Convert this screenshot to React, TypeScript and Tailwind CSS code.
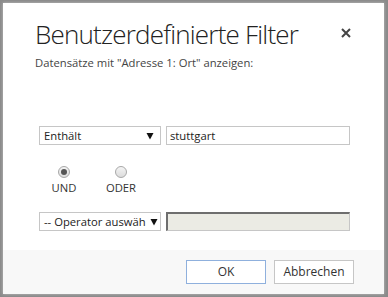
import React from 'react';

const font = { fontFamily: '"Open Sans", "Liberation Sans", sans-serif' };

function Select({ label }: { label: string }) {
  return (
    <div className="flex h-[19px] w-[122px] items-center justify-between border border-[#c6c6c6] bg-white pl-[4px] pr-[6px] text-[11.25px] text-[#222]">
      <span className="whitespace-nowrap leading-[15px]">{label}</span>
      <svg width="8" height="8" viewBox="0 0 8 8" className="ml-[4px] shrink-0">
        <path d="M0.5 1 L7.5 1 L4 7.5 Z" fill="#111" />
      </svg>
    </div>
  );
}

function Radio({ label, checked }: { label: string; checked?: boolean }) {
  return (
    <div className="flex w-[40px] flex-col items-center gap-[2px]">
      <div className="flex h-[12px] w-[12px] items-center justify-center rounded-full border border-[#a8a8a8] bg-gradient-to-b from-[#f4f4f4] to-[#dcdcdc]">
        {checked && <div className="h-[6px] w-[6px] rounded-full bg-[#555]" />}
      </div>
      <span className="text-[11.25px] leading-[15px] text-[#333]">{label}</span>
    </div>
  );
}

export default function App() {
  return (
    <div className="h-[297px] w-[388px] bg-[#8a8a8a] pl-[3px] pt-[3px]" style={font}>
      <div className="flex h-[291px] w-[381px] flex-col bg-white shadow-[0_0_3px_#c0c0c0]">
        <div className="flex items-start justify-between pl-[32px] pr-[33px] pt-[13px]">
          <h1 className="text-[26px] font-light leading-[36px] tracking-[-0.8px] text-[#222]">
            Benutzerdefinierte Filter
          </h1>
          <svg width="10" height="10" viewBox="0 0 10 10" className="mt-[12px]">
            <path d="M1 1 L9 9 M9 1 L1 9" stroke="#444" strokeWidth="2" />
          </svg>
        </div>
        <p className="mt-[3px] pl-[32px] text-[11.25px] leading-[16px] text-[#444]">
          Datensätze mit "Adresse 1: Ort" anzeigen:
        </p>

        <div className="mt-[55px] flex gap-[5px] pl-[36px]">
          <Select label="Enthält" />
          <div className="flex h-[19px] w-[184px] items-center border border-[#c6c6c6] bg-white pl-[3px] text-[11.25px] text-[#222]">
            <span className="leading-[15px]">stuttgart</span>
          </div>
        </div>

        <div className="mt-[21px] flex gap-[17px] pl-[41px]">
          <Radio label="UND" checked />
          <Radio label="ODER" />
        </div>

        <div className="mt-[17px] flex gap-[5px] pl-[36px]">
          <Select label="-- Operator auswäh" />
          <div className="h-[19px] w-[184px] border border-[#c6c6c6] border-t-2 border-l-2 border-t-[#6e6e6e] border-l-[#6e6e6e] bg-[#ebebe4]" />
        </div>

        <div className="mt-auto flex h-[44px] items-center justify-end gap-[8px] bg-[#f8f8f8] pr-[30px]">
          <button className="h-[24px] w-[80px] border border-[#8fb0dd] bg-white text-[12px] text-[#333]">
            OK
          </button>
          <button className="h-[24px] w-[80px] border border-[#c6c6c6] bg-white text-[12px] text-[#333]">
            Abbrechen
          </button>
        </div>
      </div>
    </div>
  );
}
